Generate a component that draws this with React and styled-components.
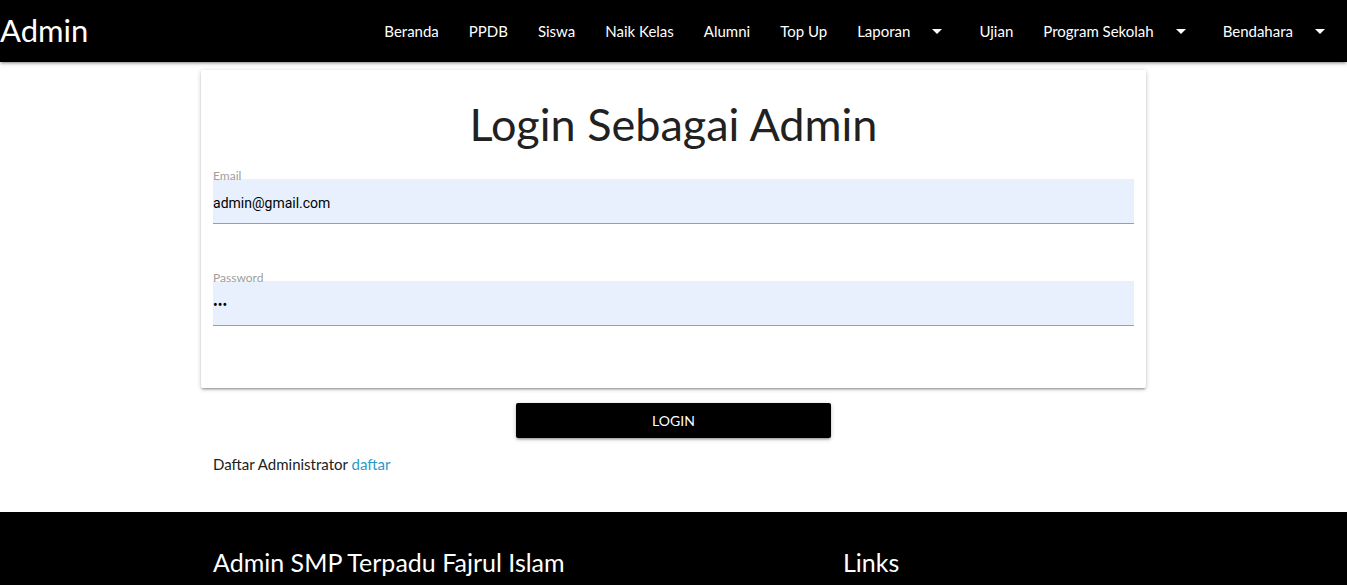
import React from 'react';
import styled, { createGlobalStyle } from 'styled-components';

const GlobalStyle = createGlobalStyle`
  body {
    margin: 0;
    background: #fff;
    font-family: Lato, "Open Sans", sans-serif;
    color: rgba(0, 0, 0, 0.87);
  }
`;

const navItems = [
  { label: 'Beranda' },
  { label: 'PPDB' },
  { label: 'Siswa' },
  { label: 'Naik Kelas' },
  { label: 'Alumni' },
  { label: 'Top Up' },
  { label: 'Laporan', dropdown: true },
  { label: 'Ujian' },
  { label: 'Program Sekolah', dropdown: true },
  { label: 'Bendahara', dropdown: true },
];

const ArrowDown = () => (
  <ArrowIcon viewBox="0 0 24 24" width="24" height="24">
    <path d="M7 10l5 5 5-5z" fill="#fff" />
  </ArrowIcon>
);

const App = () => (
  <Page>
    <GlobalStyle />
    <Navbar>
      <Brand>Admin</Brand>
      <NavList>
        {navItems.map((item) => (
          <NavItem key={item.label}>
            {item.label}
            {item.dropdown && <ArrowDown />}
          </NavItem>
        ))}
      </NavList>
    </Navbar>

    <Main>
      <Card>
        <Title>Login Sebagai Admin</Title>
        <Field>
          <Label>Email</Label>
          <Input type="email" defaultValue="admin@gmail.com" />
        </Field>
        <Field $gap>
          <Label>Password</Label>
          <Input type="password" defaultValue="abc" />
        </Field>
      </Card>
      <ButtonRow>
        <LoginButton>LOGIN</LoginButton>
      </ButtonRow>
      <RegisterText>
        Daftar Administrator <RegisterLink href="#">daftar</RegisterLink>
      </RegisterText>
    </Main>

    <Footer>
      <FooterRow>
        <FooterCol>
          <FooterTitle>Admin SMP Terpadu Fajrul Islam</FooterTitle>
        </FooterCol>
        <div />
        <FooterCol>
          <FooterTitle>Links</FooterTitle>
        </FooterCol>
      </FooterRow>
    </Footer>
  </Page>
);

const Page = styled.div`
  min-height: 585px;
  display: flex;
  flex-direction: column;
`;

const Navbar = styled.nav`
  height: 62px;
  background: #000;
  color: #fff;
  display: flex;
  align-items: center;
  justify-content: space-between;
  box-shadow: 0 2px 2px 0 rgba(0, 0, 0, 0.14), 0 3px 1px -2px rgba(0, 0, 0, 0.12),
    0 1px 5px 0 rgba(0, 0, 0, 0.2);
  position: relative;
  z-index: 2;
`;

const Brand = styled.a`
  font-size: 31px;
  line-height: 62px;
  color: #fff;
  padding-bottom: 2px;
`;

const NavList = styled.ul`
  display: flex;
  list-style: none;
  margin: 0;
  padding: 0;
  height: 62px;
`;

const NavItem = styled.li`
  display: flex;
  align-items: center;
  padding: 0 15px;
  font-size: 15px;
  color: #fff;
`;

const ArrowIcon = styled.svg`
  margin-left: 15px;
  display: block;
`;

const Main = styled.main`
  width: calc(70% + 2px);
  margin: 0 auto;
  padding-top: 8px;
  flex: 1;
`;

const Card = styled.div`
  background: #fff;
  padding: 1px 12px 62px;
  border-radius: 2px;
  box-shadow: 0 2px 2px 0 rgba(0, 0, 0, 0.14), 0 3px 1px -2px rgba(0, 0, 0, 0.12),
    0 1px 5px 0 rgba(0, 0, 0, 0.2);
`;

const Title = styled.h1`
  margin: 21px 0 0;
  text-align: center;
  font-weight: 400;
  font-size: 45px;
  line-height: 64px;
  color: #212121;
`;

const Field = styled.div`
  margin-top: ${(p) => (p.$gap ? '48px' : '14px')};
  display: flex;
  flex-direction: column;
`;

const Label = styled.label`
  position: relative;
  z-index: 1;
  font-size: 12px;
  line-height: 12px;
  color: #9e9e9e;
  margin-bottom: -3px;
`;

const Input = styled.input`
  height: 40px;
  border: none;
  border-bottom: 1px solid #9e9e9e;
  background: #e8f0fe;
  padding: 4px 0 0;
  margin: 0;
  font-family: Roboto, "Liberation Sans", sans-serif;
  font-size: 14px;
  color: #000;
  outline: none;
`;

const ButtonRow = styled.div`
  display: flex;
  justify-content: center;
  margin-top: 15px;
`;

const LoginButton = styled.button`
  width: 315px;
  height: 35px;
  background: #000;
  color: #fff;
  border: none;
  border-radius: 2px;
  font-family: Lato, "Open Sans", sans-serif;
  font-size: 14px;
  box-shadow: 0 2px 2px 0 rgba(0, 0, 0, 0.14), 0 3px 1px -2px rgba(0, 0, 0, 0.12),
    0 1px 5px 0 rgba(0, 0, 0, 0.2);
`;

const RegisterText = styled.p`
  margin: 15px 0 0;
  padding: 0 12px;
  font-size: 15px;
  line-height: 22px;
  color: #212121;
`;

const RegisterLink = styled.a`
  color: #2b9bc5;
  text-decoration: none;
`;

const Footer = styled.footer`
  background: #000;
  color: #fff;
  height: 73px;
  margin-top: 36px;
`;

const FooterRow = styled.div`
  width: calc(70% + 2px);
  margin: 0 auto;
  display: grid;
  grid-template-columns: 50% 16.6667% 33.3333%;
`;

const FooterCol = styled.div`
  padding: 0 12px;
`;

const FooterTitle = styled.h5`
  margin: 35px 0 0;
  font-size: 25px;
  font-weight: 400;
  line-height: 30px;
`;

export default App;
